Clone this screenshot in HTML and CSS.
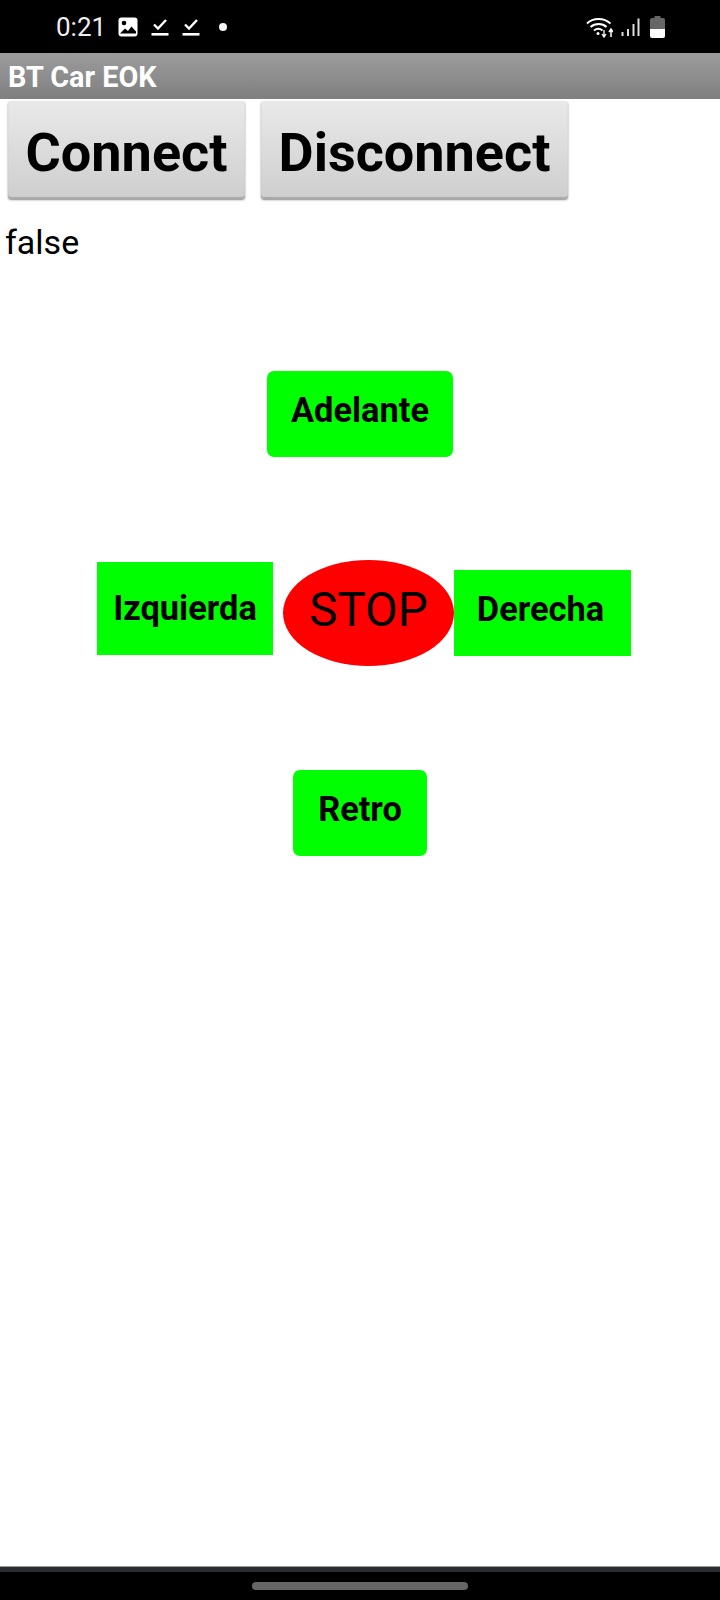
FILE: index.html
```html
<!DOCTYPE html>
<html lang="es">
<head>
<meta charset="utf-8">
<title>BT Car EOK</title>
<link rel="stylesheet" href="styles.css">
</head>
<body>
<div class="screen">
  <header class="status">
    <span class="time">0:21</span>
    <svg class="ico-photo" width="20" height="20" viewBox="0 0 20 20"><rect x="0.5" y="0.5" width="19" height="19" rx="3" fill="#fff"/><circle cx="6" cy="6" r="2.3" fill="#000"/><path d="M2 16.5l5-5 3 2.5 3.500-4.500 4.500 5v2z" fill="#000"/></svg>
    <svg class="ico-check" width="18" height="20" viewBox="0 0 18 20"><path d="M3 7.500l4 4 8-8.500" fill="none" stroke="#fff" stroke-width="2.400"/><rect x="0.500" y="16" width="17" height="2.600" fill="#fff"/></svg>
    <svg class="ico-check second" width="18" height="20" viewBox="0 0 18 20"><path d="M3 7.500l4 4 8-8.500" fill="none" stroke="#fff" stroke-width="2.400"/><rect x="0.500" y="16" width="17" height="2.600" fill="#fff"/></svg>
    <span class="dot"></span>
    <span class="status-gap"></span>
    <svg class="ico-wifi" width="27" height="22" viewBox="0 0 27 22"><g fill="none" stroke="#fff" stroke-width="2"><path d="M1 7.500C7 1.500 18 1.500 24.500 7.500"/><path d="M4.500 11C9 7 16.500 7 20.500 11"/><path d="M8 14.500c2.500-2 6-2 8.500 0"/></g><circle cx="12" cy="17.500" r="1.500" fill="#fff"/><path d="M19 12v6M17 16l2 3 2-3" fill="none" stroke="#fff" stroke-width="1.300" transform="translate(-1 2)"/><path d="M25 21v-7M23 16l2-3 2 3" fill="none" stroke="#fff" stroke-width="1.500"/></svg>
    <svg class="ico-signal" width="19" height="19" viewBox="0 0 19 19"><g fill="#ddd"><rect x="0.500" y="14" width="2" height="4"/><rect x="6" y="11" width="2" height="7"/><rect x="11.500" y="6" width="2" height="12"/><rect x="16.500" y="0.500" width="2" height="17.500"/></g></svg>
    <svg class="ico-battery" width="15" height="22" viewBox="0 0 15 22"><path d="M4.500 0h6v2h2.500a2 2 0 0 1 2 2v9H0V4a2 2 0 0 1 2-2h2.500z" fill="#666"/><path d="M0 13h15v7a2 2 0 0 1-2 2H2a2 2 0 0 1-2-2z" fill="#fff"/></svg>
  </header>

  <div class="titlebar">BT Car EOK</div>

  <main class="app">
    <div class="actions">
      <button class="btn-main btn-connect">Connect</button>
      <button class="btn-main btn-disconnect">Disconnect</button>
    </div>
    <div class="state">false</div>

    <div class="pad">
      <div class="pad-row"><button class="drive rounded forward">Adelante</button></div>
      <div class="pad-middle">
        <button class="drive left">Izquierda</button>
        <button class="stop">STOP</button>
        <button class="drive right">Derecha</button>
      </div>
      <div class="pad-row"><button class="drive rounded back">Retro</button></div>
    </div>
  </main>

  <footer class="navbar">
    <div class="nav-top"></div>
    <div class="nav-area"><span class="pill"></span></div>
  </footer>
</div>
</body>
</html>
```

FILE: styles.css
```css
* { box-sizing: border-box; }
html, body { margin: 0; padding: 0; background: #fff; }
body { font-family: Roboto, "Liberation Sans", sans-serif; color: #000; }
.screen { width: 720px; height: 1600px; display: flex; flex-direction: column; overflow: hidden; }

.status { height: 53px; flex: none; background: #000; color: #fff; display: flex; align-items: center; padding-left: 56px; }
.time { font-size: 26px; font-weight: 400; color: #eee; width: 62px; }
.ico-photo { margin-top: 1px; }
.ico-check { margin-left: 13px; margin-top: 1px; }
.ico-check.second { margin-left: 13px; }
.dot { width: 8px; height: 8px; border-radius: 50%; background: #f4f4f4; margin-left: 19px; }
.status-gap { flex: 1; }
.ico-wifi { margin-top: 1px; }
.ico-signal { margin-left: 8px; margin-top: 1px; }
.ico-battery { margin-left: 10px; margin-right: 55px; }

.titlebar { height: 46px; flex: none; background: linear-gradient(#9c9c9c, #7f7f7f); color: #fff; font-size: 28.800px; font-weight: 700; line-height: 48px; padding-left: 8px; }

.app { flex: 1; display: flex; flex-direction: column; }
.actions { display: flex; gap: 16px; padding: 2px 0 0 8px; }
button { font-family: inherit; color: #000; border: 0; padding: 0; margin: 0; }
.btn-main { height: 98px; padding-top: 5px; background: linear-gradient(#e9e9e9, #cecece); border-radius: 3px; box-shadow: 0 1px 2px #8a8a8a, inset 0 -2px 1px #a8a8a8; font-size: 54px; font-weight: 700; }
.btn-connect { width: 237px; }
.btn-disconnect { width: 307px; }

.state { font-size: 34px; line-height: 38px; margin: 24px 0 0 5px; }

.pad { display: flex; flex-direction: column; margin-top: 110px; }
.pad-row { display: flex; justify-content: center; }
.drive { background: #00ff00; font-size: 34.400px; font-weight: 700; }
.rounded { border-radius: 7px; height: 86px; padding-bottom: 8px; }
.forward { width: 186px; }
.back { width: 134px; }

.pad-middle { display: flex; align-items: flex-start; margin: 103px 0 104px 97px; }
.left { width: 176px; height: 93px; margin-top: 2px; padding-bottom: 2px; }
.right { width: 177px; height: 86px; margin-top: 10px; padding: 0 4px 8px 0; }
.stop { width: 171px; height: 106px; border-radius: 50%; background: #ff0000; font-size: 47.500px; font-weight: 400; margin-left: 10px; padding-bottom: 7px; }

.navbar { flex: none; height: 34px; background: #000; }
.nav-top { height: 6px; background: #2a2d30; border-top: 1px solid #999; }
.nav-area { height: 28px; display: flex; justify-content: center; padding-top: 10px; }
.pill { width: 216px; height: 8px; border-radius: 4px; background: #666; }
```
